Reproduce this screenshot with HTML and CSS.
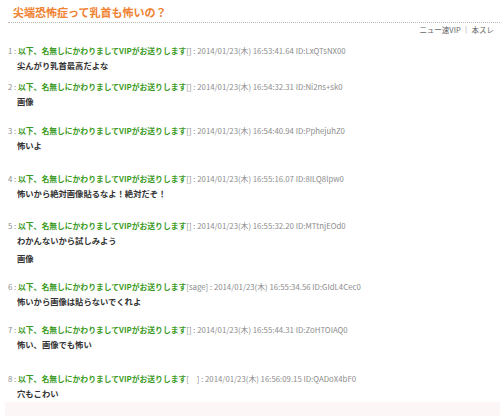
FILE: index.html
```html
<!DOCTYPE html>
<html lang="ja">
<head>
<meta charset="utf-8">
<title>尖端恐怖症って乳首も怖いの？</title>
<link rel="stylesheet" href="styles.css">
</head>
<body>
<div class="page">
  <h1 class="title">尖端恐怖症って乳首も怖いの？</h1>
  <div class="nav">ニュー速VIP ｜ 本スレ</div>
  <div class="posts">
    <div class="post m2">
      <div class="head">1 : <span class="name">以下、名無しにかわりましてVIPがお送りします</span>[] : 2014/01/23(木) 16:53:41.64 ID:LxQTsNX00</div>
      <div class="body">尖んがり乳首最高だよな</div>
    </div>
    <div class="post m10">
      <div class="head">2 : <span class="name">以下、名無しにかわりましてVIPがお送りします</span>[] : 2014/01/23(木) 16:54:32.31 ID:Ni2ns+sk0</div>
      <div class="body">画像</div>
    </div>
    <div class="post m14">
      <div class="head">3 : <span class="name">以下、名無しにかわりましてVIPがお送りします</span>[] : 2014/01/23(木) 16:54:40.94 ID:PphejuhZ0</div>
      <div class="body">怖いよ</div>
    </div>
    <div class="post m13">
      <div class="head">4 : <span class="name">以下、名無しにかわりましてVIPがお送りします</span>[] : 2014/01/23(木) 16:55:16.07 ID:8ILQ8lpw0</div>
      <div class="body">怖いから絶対画像貼るなよ！絶対だぞ！</div>
    </div>
    <div class="post m9">
      <div class="head">5 : <span class="name">以下、名無しにかわりましてVIPがお送りします</span>[] : 2014/01/23(木) 16:55:32.20 ID:MTtnjEOd0</div>
      <div class="body">わかんないから試しみよう<br>画像</div>
    </div>
    <div class="post m9">
      <div class="head">6 : <span class="name">以下、名無しにかわりましてVIPがお送りします</span>[sage] : 2014/01/23(木) 16:55:34.56 ID:GIdL4Cec0</div>
      <div class="body">怖いから画像は貼らないでくれよ</div>
    </div>
    <div class="post m15">
      <div class="head">7 : <span class="name">以下、名無しにかわりましてVIPがお送りします</span>[] : 2014/01/23(木) 16:55:44.31 ID:ZoHTOIAQ0</div>
      <div class="body">怖い、画像でも怖い</div>
    </div>
    <div class="post">
      <div class="head">8 : <span class="name">以下、名無しにかわりましてVIPがお送りします</span>[　] : 2014/01/23(木) 16:56:09.15 ID:QADoX4bF0</div>
      <div class="body">穴もこわい</div>
    </div>
  </div>
  <div class="footer-box"></div>
</div>
</body>
</html>
```

FILE: styles.css
```css
html, body {
  margin: 0;
  padding: 0;
  background: #ffffff;
}
body {
  font-family: "Noto Sans CJK JP", "Noto Sans", sans-serif;
  color: #333333;
}
.page {
  padding: 4px 0 0 8px;
}
.title {
  margin: 0;
  padding: 0 0 2px 5px;
  font-size: 11px;
  line-height: 16px;
  font-weight: bold;
  color: #f08232;
  border-bottom: 1px dotted #b8b8b8;
}
.nav {
  text-align: right;
  padding-right: 6px;
  font-size: 7.5px;
  line-height: 12px;
  color: #666666;
  margin-top: 1px;
}
.posts {
  margin-top: 7px;
}
.m2 { margin-bottom: 5px; }
.m9 { margin-bottom: 12px; }
.m10 { margin-bottom: 13px; }
.m13 { margin-bottom: 16px; }
.m14 { margin-bottom: 17px; }
.m15 { margin-bottom: 18px; }
.head {
  font-size: 7.8px;
  line-height: 16px;
  color: #8c8c8c;
  white-space: nowrap;
}
.name {
  color: #3a9a1e;
  font-weight: bold;
}
.body {
  margin-top: -3px;
  padding-left: 9px;
  font-size: 8.3px;
  line-height: 18px;
  font-weight: bold;
  color: #333333;
}
.footer-box {
  margin: 0 0 0 -3px;
  height: 20px;
  background: #fcf6f6;
}
```
